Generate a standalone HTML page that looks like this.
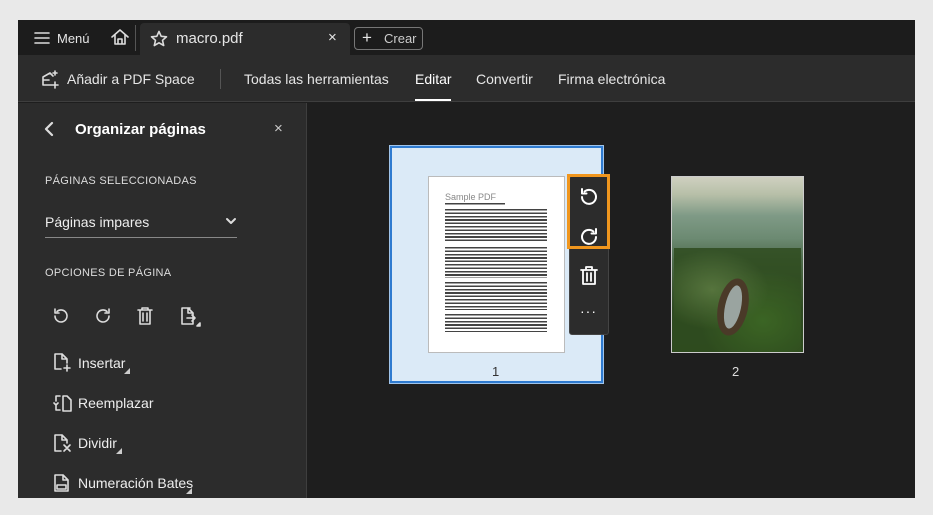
<!DOCTYPE html>
<html><head><meta charset="utf-8"><style>
*{margin:0;padding:0;box-sizing:border-box}
body{width:933px;height:515px;background:#e9e9e9;font-family:"Liberation Sans",sans-serif;position:relative;overflow:hidden}
.a{position:absolute}
.frame{left:18px;top:20px;width:897px;height:478px;background:#1e1e1e;overflow:hidden}
.t{color:#e6e6e6;white-space:nowrap}
svg{position:absolute;fill:none;stroke:#dcdcdc;stroke-width:1.6;stroke-linecap:round;stroke-linejoin:round}
.lines{background:repeating-linear-gradient(#222 0 1.6px,transparent 1.6px 3.4px);opacity:.85}
</style></head><body>
<div class="a frame">
 <div class="a" style="left:0;top:0;width:897px;height:35px;background:#1c1c1c"></div>
 <svg style="left:16px;top:11px" width="16" height="14"><path d="M1 2H15M1 7H15M1 12H15"/></svg>
 <div class="a t" style="left:39px;top:11px;font-size:13px">Menú</div>
 <svg style="left:92px;top:8px" width="20" height="18"><path d="M2 9L10 2L18 9M5 7V16H15V7M8 16V11H12V16"/></svg>
 <div class="a" style="left:117px;top:5px;width:1px;height:26px;background:#555"></div>
 <div class="a" style="left:122px;top:3px;width:210px;height:32px;background:#2c2c2c;border-radius:4px 4px 0 0"></div>
 <svg style="left:132px;top:10px" width="18" height="17"><path d="M9 1.5L11.2 6.3L16.5 6.8L12.5 10.3L13.7 15.5L9 12.8L4.3 15.5L5.5 10.3L1.5 6.8L6.8 6.3Z"/></svg>
 <div class="a t" style="left:158px;top:10px;font-size:15px">macro.pdf</div>
 <div class="a t" style="left:310px;top:9px;font-size:15px">×</div>
 <div class="a" style="left:336px;top:7px;width:69px;height:23px;border:1px solid #777;border-radius:4px"></div>
 <div class="a t" style="left:344px;top:8px;font-size:17px">+</div>
 <div class="a t" style="left:366px;top:11px;font-size:13px;color:#ccc">Crear</div>
 <div class="a" style="left:0;top:35px;width:897px;height:47px;background:#2c2c2c;border-bottom:1px solid #3e3e3e"></div>
 <svg style="left:22px;top:49px" width="20" height="20"><path d="M3 8L10 4L13 7M3 8V16H12M4 11H9M15 13V19M12 16H18M15 2V6M13 4H17"/></svg>
 <div class="a t" style="left:49px;top:51px;font-size:14px">Añadir a PDF Space</div>
 <div class="a" style="left:202px;top:49px;width:1px;height:20px;background:#555"></div>
 <div class="a t" style="left:226px;top:51px;font-size:14px">Todas las herramientas</div>
 <div class="a t" style="left:397px;top:51px;font-size:14px;color:#fff">Editar</div>
 <div class="a" style="left:397px;top:79px;width:36px;height:2px;background:#fff"></div>
 <div class="a t" style="left:458px;top:51px;font-size:14px">Convertir</div>
 <div class="a t" style="left:540px;top:51px;font-size:14px">Firma electrónica</div>
 <div class="a" style="left:0;top:83px;width:289px;height:400px;background:#2c2c2c;border-right:1px solid #3e3e3e"></div>
 <svg style="left:25px;top:101px" width="12" height="16"><path d="M9 2L3 8L9 14" stroke-width="2.2"/></svg>
 <div class="a t" style="left:57px;top:101px;font-size:15px;font-weight:bold;color:#fff">Organizar páginas</div>
 <div class="a t" style="left:256px;top:100px;font-size:15px;color:#ccc">×</div>
 <div class="a t" style="left:27px;top:155px;font-size:11px;letter-spacing:.3px;color:#ddd">PÁGINAS SELECCIONADAS</div>
 <div class="a t" style="left:27px;top:194px;font-size:14px;color:#eee">Páginas impares</div>
 <svg style="left:207px;top:197px" width="12" height="8"><path d="M2 2L6 6L10 2" stroke-width="2"/></svg>
 <div class="a" style="left:27px;top:217px;width:192px;height:1px;background:#888"></div>
 <div class="a t" style="left:27px;top:247px;font-size:11px;letter-spacing:.3px;color:#ddd">OPCIONES DE PÁGINA</div>
 <svg style="left:34px;top:287px" width="18" height="18"><path d="M3 9A6 6 0 1 0 5 4.5M3 2V6H7"/></svg>
 <svg style="left:76px;top:287px" width="18" height="18"><path d="M15 9A6 6 0 1 1 13 4.5M15 2V6H11"/></svg>
 <svg style="left:118px;top:286px" width="18" height="20"><path d="M2 4H16M6 4V2H12V4M4 4V18H14V4M7 7V15M11 7V15"/></svg>
 <svg style="left:161px;top:286px" width="22" height="22"><path d="M11 2H3V18H14V7L9 2V7H14M8 12H16M13 9L16 12L13 15"/><path d="M18 20L21 17V20Z" fill="#dcdcdc"/></svg>
 <svg style="left:35px;top:332px" width="18" height="20"><path d="M9 2H2V17H8M9 2L14 7V11M9 2V7H14M14 13V19M11 16H17"/></svg>
 <div class="a t" style="left:60px;top:335px;font-size:14px;color:#eee">Insertar</div>
 <svg style="left:106px;top:348px" width="6" height="6"><path d="M0 6L6 0V6Z" fill="#ccc" stroke="none"/></svg>
 <svg style="left:35px;top:373px" width="20" height="20"><path d="M7 3H3V8M3 12V17H7M10 3H14L18 7V18H10V3M1 10L3 12L5 10"/></svg>
 <div class="a t" style="left:60px;top:375px;font-size:14px;color:#eee">Reemplazar</div>
 <svg style="left:35px;top:413px" width="20" height="20"><path d="M9 2H2V18H8M9 2L14 7V10M9 2V7H14M11 12L17 18M17 12L11 18"/></svg>
 <div class="a t" style="left:60px;top:415px;font-size:14px;color:#eee">Dividir</div>
 <svg style="left:98px;top:428px" width="6" height="6"><path d="M0 6L6 0V6Z" fill="#ccc" stroke="none"/></svg>
 <svg style="left:35px;top:453px" width="18" height="20"><path d="M10 2H2V18H15V7L10 2V7H15M4 12H13V16H4Z"/></svg>
 <div class="a t" style="left:60px;top:455px;font-size:14px;color:#eee">Numeración Bates</div>
 <svg style="left:168px;top:468px" width="6" height="6"><path d="M0 6L6 0V6Z" fill="#ccc" stroke="none"/></svg>
 <div class="a" style="left:372px;top:126px;width:213px;height:237px;background:#dbeaf7;border:2px solid #2f7bd0;outline:1px solid #a0c4ea"></div>
 <div class="a" style="left:410px;top:156px;width:137px;height:177px;background:#fff;border:1px solid #bbb"></div>
 <div class="a" style="left:427px;top:172px;font-size:9px;color:#888">Sample PDF</div>
 <div class="a lines" style="left:427px;top:183px;width:60px;height:3px"></div>
 <div class="a lines" style="left:427px;top:189px;width:102px;height:34px"></div>
 <div class="a lines" style="left:427px;top:227px;width:102px;height:31px"></div>
 <div class="a lines" style="left:427px;top:262px;width:102px;height:28px"></div>
 <div class="a lines" style="left:427px;top:294px;width:102px;height:18px"></div>
 <div class="a t" style="left:474px;top:344px;font-size:13px;color:#333">1</div>
 <div class="a" style="left:551px;top:156px;width:40px;height:159px;background:#2c2c2c;border-radius:3px;border:1px solid #444"></div>
 <div class="a" style="left:549px;top:154px;width:43px;height:75px;border:3px solid #f0961e"></div>
 <svg style="left:560px;top:166px" width="22" height="22"><path d="M4 11A7 7 0 1 0 6.5 5.5M4 3V7.5H8.5" stroke="#fff" stroke-width="2"/></svg>
 <svg style="left:560px;top:206px" width="22" height="22"><path d="M18 11A7 7 0 1 1 15.5 5.5M18 3V7.5H13.5" stroke="#fff" stroke-width="2"/></svg>
 <svg style="left:561px;top:245px" width="20" height="22"><path d="M2 5H18M7 5V2H13V5M4 5V19H16V5M8 8V16M12 8V16" stroke="#fff" stroke-width="1.8"/></svg>
 <div class="a t" style="left:562px;top:283px;font-size:14px;color:#fff;letter-spacing:1px">···</div>
 <div class="a" style="left:653px;top:156px;width:133px;height:177px;border:1px solid #ccc;background:linear-gradient(180deg,#cfd0c0 0%,#b7bfa8 10%,#7f9a86 22%,#6c8a72 35%,#4d6a4a 48%,#3f5a34 60%,#2f4a22 75%,#2d4a1e 100%)"></div>
 <div class="a" style="left:656px;top:228px;width:127px;height:104px;background:radial-gradient(ellipse at 30% 40%,#5b7a40 0,transparent 45%),radial-gradient(ellipse at 70% 70%,#3e6a25 0,transparent 50%),#2f4c1f;opacity:.85"></div>
 <div class="a" style="left:700px;top:258px;width:30px;height:58px;border:7px solid #4a3a28;border-radius:50%;background:#9aa4a0;transform:rotate(12deg)"></div>
 <div class="a t" style="left:714px;top:344px;font-size:13px;color:#ddd">2</div>
</div>
</body></html>
